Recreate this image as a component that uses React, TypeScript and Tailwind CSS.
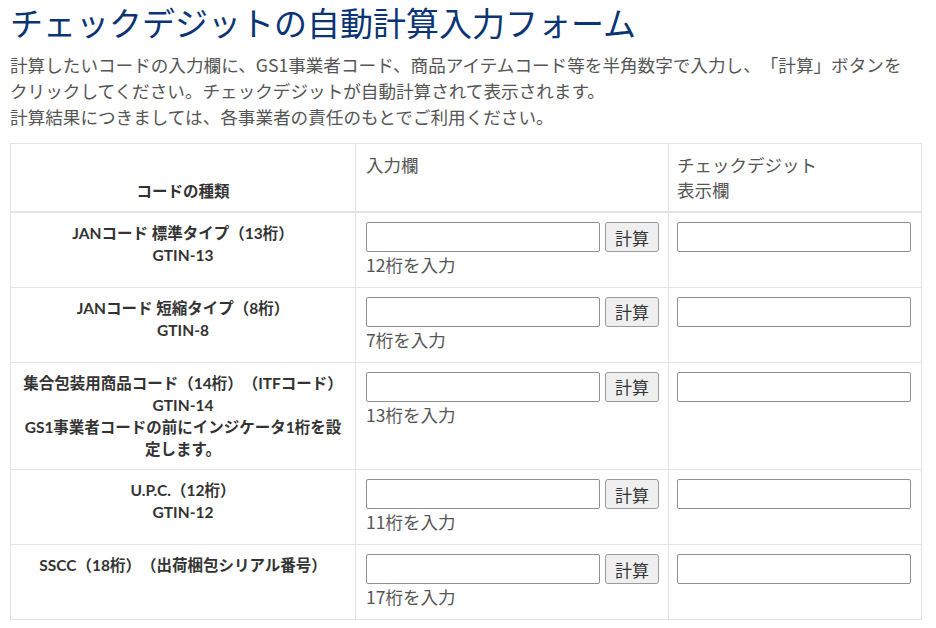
const FONT = "font-['Noto_Sans_CJK_JP','Noto_Sans',sans-serif] [text-spacing-trim:space-all]";

const ROWS = [
  { lines: ["JANコード 標準タイプ（13桁）", "GTIN-13"], hint: "12桁を入力" },
  { lines: ["JANコード 短縮タイプ（8桁）", "GTIN-8"], hint: "7桁を入力" },
  {
    lines: ["集合包装用商品コード（14桁）（ITFコード）", "GTIN-14", "GS1事業者コードの前にインジケータ1桁を設", "定します。"],
    hint: "13桁を入力",
  },
  { lines: ["U.P.C.（12桁）", "GTIN-12"], hint: "11桁を入力" },
  { lines: ["SSCC（18桁）（出荷梱包シリアル番号）"], hint: "17桁を入力" },
];

function CodeRow({ lines, hint }: { lines: string[]; hint: string }) {
  return (
    <tr>
      <td className="border border-[#e3e3e3] px-2 pt-[9px] pb-[9.75px] text-center align-top">
        {lines.map((line) => (
          <div
            key={line}
            className="whitespace-nowrap font-['Lato','Noto_Sans_CJK_JP',sans-serif] text-[15.5px] font-bold leading-[22px] text-[#333]"
          >
            {line}
          </div>
        ))}
      </td>
      <td className="border border-[#e3e3e3] pl-[10px] pr-2 pt-[9px] pb-[9.75px] align-top">
        <div className="flex items-center gap-[5px]">
          <input
            type="text"
            className="h-[30px] w-[234px] rounded-[2px] border border-[#8f8f8f] bg-white px-1 outline-none"
          />
          <button
            type="button"
            className="h-[30px] w-[54px] rounded-[3px] border border-[#9a9a9a] bg-[#efefef] text-[17px] leading-none text-[#333]"
          >
            計算
          </button>
        </div>
        <div className="text-[17.5px] leading-[25px] text-[#555]">{hint}</div>
      </td>
      <td className="border border-[#e3e3e3] pl-[8px] pr-2 pt-[9px] pb-[9.75px] align-top">
        <input
          type="text"
          className="h-[30px] w-[234px] rounded-[2px] border border-[#8f8f8f] bg-white px-1 outline-none"
        />
      </td>
    </tr>
  );
}

export default function App() {
  return (
    <div className={`${FONT} min-h-[628px] w-[936px] bg-white pl-[10px] pt-[2px]`}>
      <h1 className="text-[33px] font-normal leading-[40px] text-[#0a3474]">
        チェックデジットの自動計算入力フォーム
      </h1>
      <p className="mt-[10px] whitespace-nowrap text-[17.6px] leading-[26px] text-[#555]">
        計算したいコードの入力欄に、GS1事業者コード、商品アイテムコード等を半角数字で入力し、「計算」ボタンを
        <br />
        クリックしてください。チェックデジットが自動計算されて表示されます。
        <br />
        計算結果につきましては、各事業者の責任のもとでご利用ください。
      </p>
      <table className="mt-[13px] w-[911px] table-fixed border-collapse">
        <colgroup>
          <col className="w-[345px]" />
          <col className="w-[313px]" />
          <col className="w-[253px]" />
        </colgroup>
        <thead>
          <tr>
            <th className="border border-b-2 border-[#e3e3e3] px-2 pt-[8px] pb-[9px] text-center align-bottom font-['Lato','Noto_Sans_CJK_JP',sans-serif] text-[15.5px] font-bold leading-[22px] text-[#333]">
              コードの種類
            </th>
            <th className="border border-b-2 border-[#e3e3e3] pl-[10px] pr-2 pt-[8px] pb-[9px] text-left align-top text-[17.5px] font-normal leading-[25px] text-[#555]">
              入力欄
            </th>
            <th className="border border-b-2 border-[#e3e3e3] pl-[8px] pr-2 pt-[8px] pb-[9px] text-left align-top text-[17.5px] font-normal leading-[25px] text-[#555]">
              チェックデジット
              <br />
              表示欄
            </th>
          </tr>
        </thead>
        <tbody>
          {ROWS.map((row) => (
            <CodeRow key={row.hint} lines={row.lines} hint={row.hint} />
          ))}
        </tbody>
      </table>
    </div>
  );
}
